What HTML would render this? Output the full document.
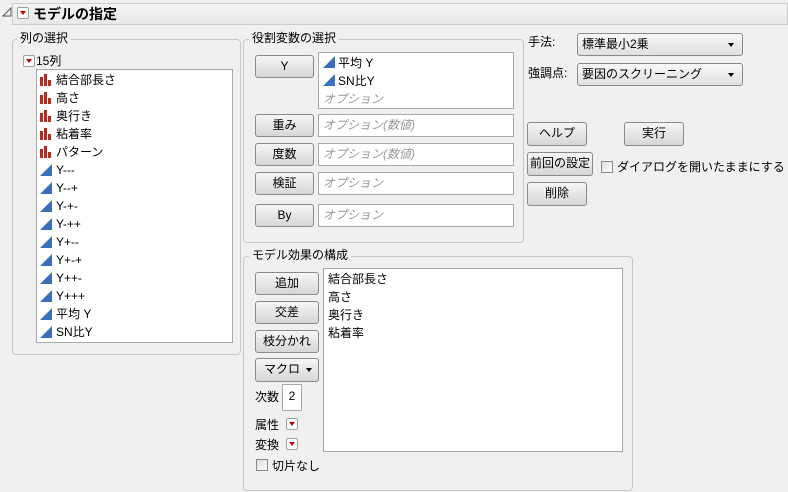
<!DOCTYPE html>
<html><head><meta charset="utf-8"><style>
*{box-sizing:border-box;margin:0;padding:0}
body{width:788px;height:492px;background:#f0f0f0;font-family:"Liberation Sans","Noto Sans CJK JP",sans-serif;font-size:12px;color:#000;position:relative;overflow:hidden}
.a{position:absolute;white-space:nowrap}
.grp{position:absolute;border:1px solid #c8c8c8;border-radius:4px}
.lbl{position:absolute;background:#f0f0f0;padding:0 3px;line-height:14px}
.btn{position:absolute;border:1px solid #8a8a8a;border-radius:3px;background:linear-gradient(#f6f6f6,#e6e6e6 50%,#d6d6d6);text-align:center;line-height:20px}
.box{position:absolute;background:#fff;border:1px solid #a8a8a8}
.ph{color:#9a9a9a;font-style:italic}
.rb{position:absolute;width:12px;height:12px;border:1px solid #a0a0a0;border-radius:2px;background:#fff}
.rb:after{content:"";position:absolute;left:2px;top:3px;border-left:3px solid transparent;border-right:3px solid transparent;border-top:4px solid #c00}
.bar{position:absolute;width:13px;height:12px}
.tri{position:absolute;width:12px;height:12px}
.cb{position:absolute;width:12px;height:12px;border:1px solid #8a8a8a;background:linear-gradient(135deg,#ddd,#fff)}
.dd{position:absolute;border:1px solid #8a8a8a;border-radius:3px;background:linear-gradient(#f8f8f8,#e0e0e0);line-height:21px;padding-left:4px}
.dd:after{content:"";position:absolute;right:8px;top:9px;border-left:3px solid transparent;border-right:3px solid transparent;border-top:4px solid #000}
</style></head><body>
<svg class="a" style="left:2px;top:7px" width="10" height="10"><path d="M1 9 L9 9 L9 1 Z" fill="none" stroke="#555"/></svg>
<div class="a" style="left:12px;top:3px;width:776px;height:22px;border:1px solid #ccc;background:linear-gradient(#f4f4f4,#e8e8e8)"></div>
<div class="rb" style="left:17px;top:7px"></div>
<div class="a" style="left:33px;top:4px;font-size:14px;font-weight:bold;line-height:20px">モデルの指定</div>

<div class="grp" style="left:12px;top:39px;width:229px;height:316px"></div>
<div class="lbl" style="left:17px;top:31px">列の選択</div>
<div class="rb" style="left:23px;top:55px"></div>
<div class="a" style="left:36px;top:53px;line-height:16px">15列</div>
<div class="box" style="left:36px;top:69px;width:197px;height:274px"></div>
<div class="a" style="left:40px;top:71px;line-height:18px">
<div id="lst"></div></div>
<div class="a" style="left:40px;top:71px;line-height:18px;width:190px">
<div style="position:relative">
<svg class="bar" style="left:0;top:3px"><path d="M0 12V3h3v9zM4 12V0h3v12zM8 12V6h3v6zM0 12h13" fill="#c0281c"/></svg><span style="margin-left:16px">結合部長さ</span><br>
<svg class="bar" style="left:0;top:21px"><path d="M0 12V3h3v9zM4 12V0h3v12zM8 12V6h3v6z" fill="#c0281c"/></svg><span style="margin-left:16px">高さ</span><br>
<svg class="bar" style="left:0;top:39px"><path d="M0 12V3h3v9zM4 12V0h3v12zM8 12V6h3v6z" fill="#c0281c"/></svg><span style="margin-left:16px">奥行き</span><br>
<svg class="bar" style="left:0;top:57px"><path d="M0 12V3h3v9zM4 12V0h3v12zM8 12V6h3v6z" fill="#c0281c"/></svg><span style="margin-left:16px">粘着率</span><br>
<svg class="bar" style="left:0;top:75px"><path d="M0 12V3h3v9zM4 12V0h3v12zM8 12V6h3v6z" fill="#c0281c"/></svg><span style="margin-left:16px">パターン</span><br>
<span style="margin-left:16px">Y---</span><br><span style="margin-left:16px">Y--+</span><br><span style="margin-left:16px">Y-+-</span><br><span style="margin-left:16px">Y-++</span><br><span style="margin-left:16px">Y+--</span><br><span style="margin-left:16px">Y+-+</span><br><span style="margin-left:16px">Y++-</span><br><span style="margin-left:16px">Y+++</span><br><span style="margin-left:16px">平均 Y</span><br><span style="margin-left:16px">SN比Y</span>
<svg class="a" style="left:0;top:93px" width="13" height="180"><defs><path id="t" d="M0 12L12 0V12Z" fill="#3a6fc0"/></defs><use href="#t" y="0"/><use href="#t" y="18"/><use href="#t" y="36"/><use href="#t" y="54"/><use href="#t" y="72"/><use href="#t" y="90"/><use href="#t" y="108"/><use href="#t" y="126"/><use href="#t" y="144"/><use href="#t" y="162"/></svg>
</div></div>

<div class="grp" style="left:243px;top:39px;width:281px;height:204px"></div>
<div class="lbl" style="left:249px;top:31px">役割変数の選択</div>
<div class="btn" style="left:255px;top:55px;width:59px;height:23px">Y</div>
<div class="box" style="left:318px;top:52px;width:196px;height:57px;line-height:18px;padding:1px 0 0 4px">
<span style="margin-left:15px">平均 Y</span><br><span style="margin-left:15px">SN比Y</span><br><span class="ph">オプション</span>
<svg class="a" style="left:4px;top:3px" width="13" height="32"><path d="M0 12L12 0V12Z M0 30L12 18V30Z" fill="#3a6fc0"/></svg></div>
<div class="btn" style="left:255px;top:114px;width:59px;height:23px">重み</div>
<div class="box ph" style="left:318px;top:114px;width:196px;height:23px;line-height:21px;padding-left:4px">オプション(数値)</div>
<div class="btn" style="left:255px;top:143px;width:59px;height:23px">度数</div>
<div class="box ph" style="left:318px;top:143px;width:196px;height:23px;line-height:21px;padding-left:4px">オプション(数値)</div>
<div class="btn" style="left:255px;top:172px;width:59px;height:23px">検証</div>
<div class="box ph" style="left:318px;top:172px;width:196px;height:23px;line-height:21px;padding-left:4px">オプション</div>
<div class="btn" style="left:255px;top:204px;width:59px;height:23px">By</div>
<div class="box ph" style="left:318px;top:204px;width:196px;height:23px;line-height:21px;padding-left:4px">オプション</div>

<div class="a" style="left:528px;top:33px">手法:</div>
<div class="dd" style="left:577px;top:33px;width:166px;height:23px">標準最小2乗</div>
<div class="a" style="left:528px;top:64px">強調点:</div>
<div class="dd" style="left:577px;top:63px;width:166px;height:23px">要因のスクリーニング</div>
<div class="btn" style="left:527px;top:122px;width:60px;height:24px">ヘルプ</div>
<div class="btn" style="left:624px;top:122px;width:60px;height:24px">実行</div>
<div class="btn" style="left:527px;top:152px;width:66px;height:24px">前回の設定</div>
<div class="cb" style="left:601px;top:161px"></div>
<div class="a" style="left:617px;top:158px">ダイアログを開いたままにする</div>
<div class="btn" style="left:527px;top:182px;width:60px;height:24px">削除</div>

<div class="grp" style="left:243px;top:256px;width:390px;height:235px"></div>
<div class="lbl" style="left:249px;top:248px">モデル効果の構成</div>
<div class="btn" style="left:255px;top:272px;width:64px;height:23px">追加</div>
<div class="btn" style="left:255px;top:301px;width:64px;height:23px">交差</div>
<div class="btn" style="left:255px;top:330px;width:64px;height:23px">枝分かれ</div>
<div class="btn" style="left:255px;top:358px;width:64px;height:24px;text-align:left;padding-left:8px">マクロ</div>
<div class="a" style="left:306px;top:368px;border-left:3px solid transparent;border-right:3px solid transparent;border-top:4px solid #000"></div>
<div class="a" style="left:255px;top:388px">次数</div>
<div class="box" style="left:282px;top:384px;width:20px;height:27px;text-align:center;line-height:22px">2</div>
<div class="a" style="left:255px;top:416px">属性</div><div class="rb" style="left:286px;top:418px"></div>
<div class="a" style="left:255px;top:436px">変換</div><div class="rb" style="left:286px;top:438px"></div>
<div class="cb" style="left:256px;top:459px"></div>
<div class="a" style="left:272px;top:457px">切片なし</div>
<div class="box" style="left:323px;top:268px;width:300px;height:184px;line-height:18px;padding:1px 0 0 4px">結合部長さ<br>高さ<br>奥行き<br>粘着率</div>
</body></html>
